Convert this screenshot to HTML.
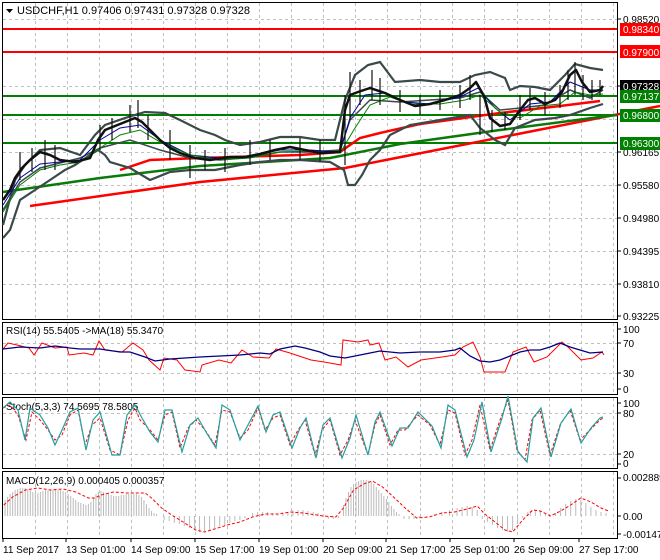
<!DOCTYPE html>
<html><head><meta charset="utf-8"><style>
html,body{margin:0;padding:0;background:#fff;}
svg{display:block;font-family:"Liberation Sans",sans-serif;}
</style></head><body>
<svg width="660" height="560" viewBox="0 0 660 560" xmlns="http://www.w3.org/2000/svg">
<rect width="660" height="560" fill="#fff"/>
<g fill="none" stroke="#000" stroke-width="1">
<rect x="2.5" y="2.5" width="615" height="317"/>
<rect x="2.5" y="322.5" width="615" height="72"/>
<rect x="2.5" y="397.5" width="615" height="71"/>
<rect x="2.5" y="471.5" width="615" height="67"/>
</g>
<g stroke="#c0c0c0" stroke-dasharray="3,3" stroke-width="1">
<path d="M35.5 3V319M67.5 3V319M99.5 3V319M131.5 3V319M163.5 3V319M195.5 3V319M227.5 3V319M259.5 3V319M291.5 3V319M323.5 3V319M355.5 3V319M387.5 3V319M420.5 3V319M452.5 3V319M484.5 3V319M517.5 3V319M549.5 3V319M581.5 3V319M613.5 3V319"/>
<path d="M35.5 323V394M67.5 323V394M99.5 323V394M131.5 323V394M163.5 323V394M195.5 323V394M227.5 323V394M259.5 323V394M291.5 323V394M323.5 323V394M355.5 323V394M387.5 323V394M420.5 323V394M452.5 323V394M484.5 323V394M517.5 323V394M549.5 323V394M581.5 323V394M613.5 323V394"/>
<path d="M35.5 398V468M67.5 398V468M99.5 398V468M131.5 398V468M163.5 398V468M195.5 398V468M227.5 398V468M259.5 398V468M291.5 398V468M323.5 398V468M355.5 398V468M387.5 398V468M420.5 398V468M452.5 398V468M484.5 398V468M517.5 398V468M549.5 398V468M581.5 398V468M613.5 398V468"/>
<path d="M35.5 472V538M67.5 472V538M99.5 472V538M131.5 472V538M163.5 472V538M195.5 472V538M227.5 472V538M259.5 472V538M291.5 472V538M323.5 472V538M355.5 472V538M387.5 472V538M420.5 472V538M452.5 472V538M484.5 472V538M517.5 472V538M549.5 472V538M581.5 472V538M613.5 472V538"/>
<path d="M3 19.5H617M3 52.5H617M3 86.5H617M3 119.5H617M3 152.5H617M3 185.5H617M3 218.5H617M3 251.5H617M3 284.5H617"/>
<path d="M3 343.5H617M3 373.5H617M3 413.5H617M3 454.5H617"/>
</g>
<g stroke-width="2">
<path d="M3 29H617M3 52H617" stroke="#f00"/>
<path d="M3 96H617M3 115H617M3 143H617" stroke="#008000"/>
</g>
<polyline fill="none" stroke="#f00" stroke-width="2.5" points="30,206 200,182 345,168 660,106"/>
<polyline fill="none" stroke="#0a7a0a" stroke-width="2.5" points="3,192 100,178 200,166 330,158 400,144 500,130 600,117 617,115"/>
<polyline fill="none" stroke="#f00" stroke-width="2.5" points="120,170 150,160 200,158 300,155 340,152 360,138 380,133 420,124 500,113 560,106 600,101"/>
<g fill="none" stroke="#3a4a4a" stroke-width="2.2">
<polyline points="3,225 15,180 25,165 40,150 60,148 80,155 95,135 105,125 125,118 145,112 165,113 180,120 200,130 215,135 225,140 240,145 260,142 280,137 300,137 320,140 335,140 345,100 355,75 368,65 380,62 395,82 420,80 440,82 460,82 475,75 490,72 505,78 510,90 520,86 535,87 550,90 565,75 575,64 590,68 603,70"/>
<polyline points="3,238 10,230 20,200 35,190 50,180 65,170 75,165 90,155 98,150 105,155 110,162 130,168 150,180 170,172 190,170 215,170 240,165 260,162 280,160 300,160 330,162 344,170 348,185 355,185 362,175 370,160 380,150 390,135 410,125 440,120 470,115 480,128 495,140 505,145 515,128 535,120 555,118 570,115 590,108 603,104"/>
<polyline points="3,210 20,182 40,168 60,163 80,158 100,148 130,140 160,150 190,158 220,160 250,157 280,152 310,152 340,150 350,120 370,100 400,102 430,100 460,98 480,92 500,110 520,108 545,105 570,90 590,98 603,90" stroke-width="1.5"/>
</g>
<polyline fill="none" stroke="#0000a0" stroke-width="1" points="3,205 20,178 40,164 60,162 80,160 100,140 120,128 140,125 160,140 190,155 220,158 250,156 280,150 310,150 340,152 350,118 365,95 385,93 405,102 430,104 460,97 478,88 495,108 510,120 530,104 550,102 570,82 590,90 603,90"/>
<polyline fill="none" stroke="#008000" stroke-width="1" points="3,212 20,185 40,170 60,165 80,162 100,148 120,135 140,130 160,142 190,155 220,160 250,158 280,152 310,151 340,153 355,128 370,105 390,97 410,104 440,104 465,100 480,95 500,112 520,118 540,106 560,104 575,92 590,95 603,94"/>
<polyline fill="none" stroke="#111" stroke-width="2.5" stroke-linejoin="round" points="3,200 10,190 15,178 22,168 30,160 40,152 50,155 60,160 75,162 90,158 98,140 105,130 115,126 125,122 135,118 142,122 150,130 160,140 170,148 180,153 195,158 210,160 230,157 245,157 260,154 275,150 290,147 305,150 320,153 340,152 345,110 350,95 358,92 370,88 385,93 400,100 415,106 430,104 445,100 460,95 470,88 476,82 484,96 490,118 500,126 510,124 520,110 528,100 535,98 545,104 555,100 562,92 570,75 576,70 582,82 590,92 600,90 603,86"/>
<g stroke="#111" stroke-width="1.2">
<path d="M20 152V180M32 148V172M45 140V170M55 145V170M100 125V150M112 118V140M130 105V132M138 100V128M148 115V140M170 130V160M190 145V178M205 150V170M225 148V172M250 140V165M270 140V160M300 138V160M320 140V162M345 95V165M350 72V120M360 80V105M372 70V100M380 78V105M400 90V112M420 95V115M440 90V110M460 85V108M470 75V100M480 95V135M492 110V132M505 112V130M520 95V120M530 88V110M545 92V115M560 85V108M568 70V100M575 62V95M583 75V100M592 80V100M600 80V95"/>
</g>
<path d="M6 9h7l-3.5 4z" fill="#000"/>
<text x="17" y="14" font-size="11" fill="#000">USDCHF,H1  0.97406 0.97431 0.97328 0.97328</text>
<g font-size="10" fill="#000">
<path d="M617 19h4M617 86h4M617 152h4M617 185h4M617 218h4M617 251h4M617 284h4M617 316h4M617 329h4M617 343h4M617 373h4M617 389h4M617 403h4M617 413h4M617 454h4M617 464h4M617 478h4M617 516h4M617 534h4" stroke="#000"/>
<text x="623" y="23">0.98520</text>
<text x="623" y="156">0.96165</text>
<text x="623" y="189">0.95580</text>
<text x="623" y="222">0.94980</text>
<text x="623" y="255">0.94395</text>
<text x="623" y="288">0.93810</text>
<text x="623" y="320">0.93225</text>
</g>
<rect x="620" y="23" width="40" height="13" fill="#f00"/><text x="623" y="33" font-size="10" fill="#fff">0.98340</text>
<rect x="620" y="45" width="40" height="13" fill="#f00"/><text x="623" y="56" font-size="10" fill="#fff">0.97900</text>
<rect x="620" y="80" width="40" height="12" fill="#000"/><text x="623" y="90" font-size="10" fill="#fff">0.97328</text>
<rect x="620" y="90" width="40" height="13" fill="#008000"/><text x="623" y="100" font-size="10" fill="#fff">0.97137</text>
<rect x="620" y="109" width="40" height="13" fill="#008000"/><text x="623" y="119" font-size="10" fill="#fff">0.96800</text>
<rect x="620" y="137" width="40" height="13" fill="#008000"/><text x="623" y="147" font-size="10" fill="#fff">0.96300</text>
<!-- RSI -->
<text x="6" y="334" font-size="10">RSI(14) 55.5405  -&gt;MA(18) 55.3470</text>
<g font-size="10"><text x="623" y="333">100</text><text x="623" y="347">70</text><text x="623" y="377">30</text><text x="623" y="393">0</text></g>
<polyline fill="none" stroke="#f00" stroke-width="1" points="3,349 8,343 17,345 29,348 34,355 42,343 55,348 67,347 69,355 84,353 93,355 99,341 105,350 122,352 133,343 143,350 149,360 160,370 164,358 177,360 185,370 200,372 202,365 219,360 231,363 242,350 253,357 269,358 276,349 290,353 311,360 324,362 341,365 343,340 358,342 368,340 370,345 379,343 385,360 396,357 408,367 421,360 442,357 455,355 463,347 473,342 480,357 484,372 505,372 513,352 526,347 534,362 547,357 562,342 568,347 581,360 593,358 602,352 604,355"/>
<polyline fill="none" stroke="#000080" stroke-width="1.3" points="3,349 20,347 40,348 55,346 70,348 80,349 100,349 120,352 130,352 145,357 155,361 170,359 185,358 200,357 220,356 240,355 260,353 270,354 280,349 295,346 305,348 320,352 330,356 345,358 360,355 380,351 400,353 420,352 440,352 455,350 460,348 470,356 480,361 490,362 500,360 510,356 520,352 530,350 540,350 550,347 560,343 570,347 580,350 590,353 603,352"/>
<!-- Stoch -->
<text x="6" y="410" font-size="10">Stoch(5,3,3) 74.5695 78.5805</text>
<g font-size="10"><text x="623" y="407">100</text><text x="623" y="417">80</text><text x="623" y="458">20</text><text x="623" y="467">0</text></g>
<polyline fill="none" stroke="#f00" stroke-width="1" stroke-dasharray="3,2" points="3,408 10,405 18,415 26,440 32,412 40,420 48,430 55,440 62,435 70,415 78,410 85,445 92,425 100,418 110,450 120,455 128,420 135,408 140,420 150,430 158,440 165,415 172,412 180,448 188,428 196,420 205,430 215,445 222,410 230,412 240,438 248,430 258,408 265,430 273,418 280,415 290,445 298,430 305,420 315,455 322,430 330,420 340,455 348,440 355,420 368,455 375,425 380,415 390,445 398,430 405,430 418,415 430,425 440,445 448,410 455,413 465,455 472,440 480,405 490,450 500,420 508,400 517,450 525,460 532,420 540,410 550,455 560,425 570,410 580,440 590,430 600,420 603,418"/>
<polyline fill="none" stroke="#20a0a0" stroke-width="1.2" points="3,408 10,402 18,410 25,440 30,408 40,415 48,428 55,445 62,430 70,412 78,408 86,450 93,420 100,412 112,455 120,455 127,415 135,405 142,418 150,432 158,442 165,410 172,410 182,452 190,425 198,418 206,432 216,448 222,405 230,410 240,440 248,425 258,406 266,432 273,415 280,412 292,448 300,428 306,418 316,458 323,425 330,418 342,458 350,438 356,415 368,455 375,422 380,412 392,446 400,428 408,428 418,412 432,426 441,448 448,405 455,410 467,457 474,440 482,402 491,452 502,418 508,396 518,452 527,462 533,418 541,408 551,457 561,423 571,409 581,443 591,428 600,418 603,417"/>
<!-- MACD -->
<text x="6" y="484" font-size="10">MACD(12,26,9) 0.000405 0.000357</text>
<g font-size="10"><text x="623" y="481">0.002889</text><text x="623" y="520">0.00</text><text x="623" y="538">-0.001476</text></g>
<g transform="scale(1.2626,1)">
<g stroke="#bbb" stroke-width="1" vector-effect="non-scaling-stroke">
<path vector-effect="non-scaling-stroke" d="M4 516V500M6 516V497M8 516V494M10 516V492M12 516V490M14 516V489M16 516V488M18 516V488M20 516V488M22 516V489M24 516V490M26 516V492M28 516V493M30 516V493M32 516V492M34 516V491M36 516V490M38 516V490M40 516V490M42 516V490M44 516V490M46 516V490M48 516V490M50 516V491M52 516V492M54 516V494M56 516V496M58 516V498M60 516V500M62 516V502M64 516V503M66 516V504M68 516V505M70 516V504M72 516V502M74 516V498M76 516V494M78 516V492M80 516V491M82 516V492M84 516V493M86 516V494M88 516V495M90 516V496M92 516V496M94 516V496M96 516V495M98 516V495M100 516V494M102 516V494M104 516V494M106 516V494M108 516V494M110 516V495M112 516V497M114 516V500M116 516V504M118 516V508M120 516V511M122 516V513M124 516V514"/>
<path vector-effect="non-scaling-stroke" d="M130 516V520M134 516V521M138 516V523M142 516V524M146 516V526M150 516V528M154 516V530M158 516V532M162 516V531M166 516V530M170 516V528M174 516V526M178 516V525M182 516V523M186 516V521M190 516V520M194 516V518"/>
<path vector-effect="non-scaling-stroke" d="M200 516V513M204 516V512M208 516V512M212 516V512M216 516V513M220 516V514M224 516V513M228 516V512M232 516V510M236 516V510M240 516V510M244 516V511M248 516V512M252 516V513M256 516V517M260 516V519M264 516V519M268 516V518"/>
<path vector-effect="non-scaling-stroke" d="M272 516V505M274 516V498M276 516V492M278 516V487M280 516V484M282 516V482M284 516V481M286 516V480M288 516V480M290 516V480M292 516V481M294 516V482M296 516V484M298 516V487M300 516V490M302 516V493M304 516V496M306 516V499M308 516V502M310 516V506M312 516V509M314 516V512M316 516V514"/>
<path vector-effect="non-scaling-stroke" d="M320 516V519M324 516V519M328 516V519M332 516V518M338 516V517M344 516V514M350 516V512M356 516V510M362 516V508M366 516V507M370 516V506M374 516V507M378 516V510"/>
<path vector-effect="non-scaling-stroke" d="M382 516V519M386 516V522M390 516V525M394 516V528M398 516V530M402 516V532M406 516V530M410 516V524M414 516V518M418 516V512M420 516V511M424 516V510M428 516V511M432 516V513M436 516V516M440 516V513M444 516V508M448 516V504M452 516V501M456 516V499M460 516V500M464 516V503M468 516V507M472 516V510M476 516V512M480 516V513"/>
</g>
<polyline vector-effect="non-scaling-stroke" fill="none" stroke="#f00" stroke-width="1" stroke-dasharray="3,2" points="3,505 10,497 20,490 30,488 40,490 50,489 60,492 70,498 75,498 80,495 90,492 100,493 115,493 120,498 128,508 136,515 145,522 155,530 162,532 170,529 180,525 190,522 200,517 210,514 220,514 230,512 240,513 256,516 266,517 272,508 280,490 288,484 295,481 303,487 310,495 320,507 330,518 340,517 350,513 360,512 370,509 378,506 384,514 392,522 400,530 406,532 414,520 422,510 428,511 436,516 444,511 452,505 460,498 468,502 476,508 482,511"/>
</g>
<!-- date axis -->
<g stroke="#000"><path d="M3 538v4M66 538v4M131 538v4M195 538v4M259 538v4M323 538v4M386 538v4M450 538v4M514 538v4M579 538v4"/></g>
<g font-size="10">
<text x="3" y="553">11 Sep 2017</text>
<text x="66" y="553">13 Sep 01:00</text>
<text x="131" y="553">14 Sep 09:00</text>
<text x="195" y="553">15 Sep 17:00</text>
<text x="259" y="553">19 Sep 01:00</text>
<text x="323" y="553">20 Sep 09:00</text>
<text x="386" y="553">21 Sep 17:00</text>
<text x="450" y="553">25 Sep 01:00</text>
<text x="514" y="553">26 Sep 09:00</text>
<text x="579" y="553">27 Sep 17:00</text>
</g>
</svg>
</body></html>
